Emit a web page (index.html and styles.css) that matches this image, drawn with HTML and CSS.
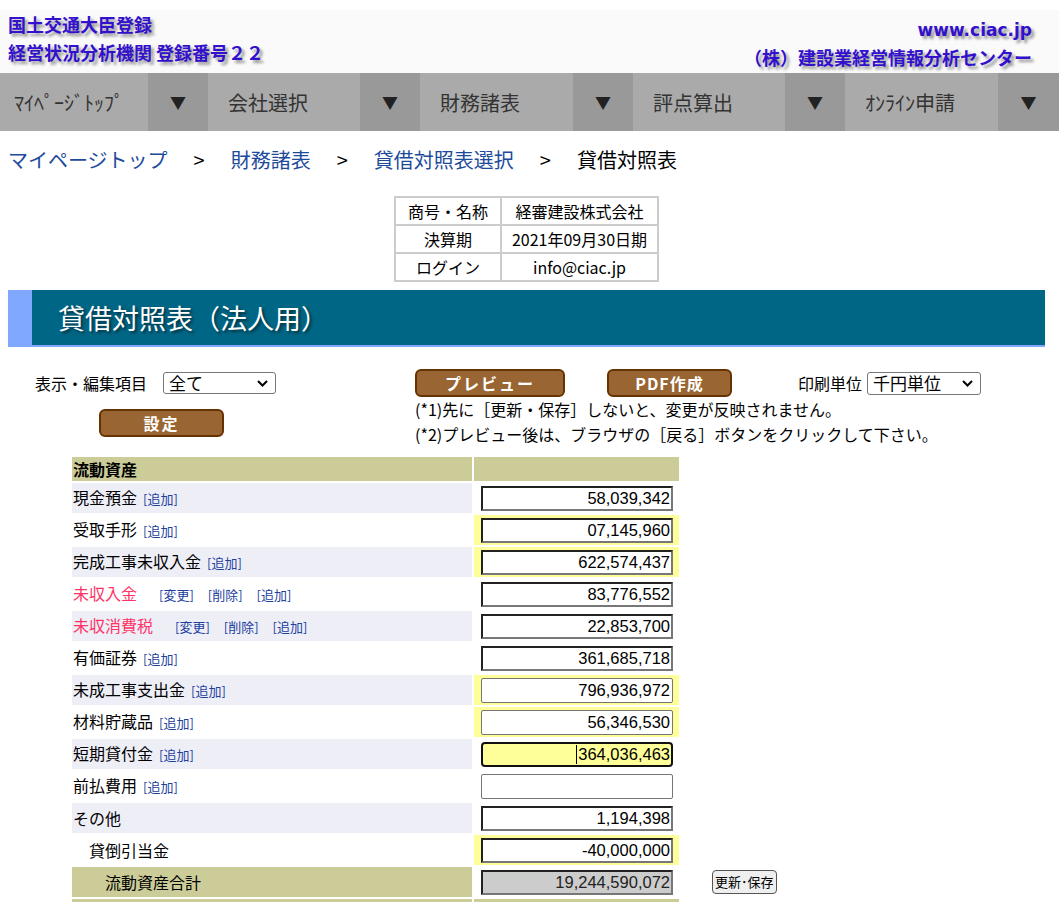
FILE: index.html
```html
<!DOCTYPE html>
<html lang="ja">
<head>
<meta charset="utf-8">
<title>貸借対照表（法人用）</title>
<link rel="stylesheet" href="styles.css">
</head>
<body>
<header class="site-header">
  <div class="brand-left">
    <div>国土交通大臣登録</div>
    <div>経営状況分析機関 登録番号２２</div>
  </div>
  <div class="brand-right">
    <div class="url">www.ciac.jp</div>
    <div>（株）建設業経営情報分析センター</div>
  </div>
</header>

<nav class="main-nav">
  <div class="nav-item first"><span class="nav-label">ﾏｲﾍﾟｰｼﾞﾄｯﾌﾟ</span><span class="nav-arrow">▼</span></div>
  <div class="nav-item"><span class="nav-label">会社選択</span><span class="nav-arrow">▼</span></div>
  <div class="nav-item"><span class="nav-label">財務諸表</span><span class="nav-arrow">▼</span></div>
  <div class="nav-item"><span class="nav-label">評点算出</span><span class="nav-arrow">▼</span></div>
  <div class="nav-item"><span class="nav-label">ｵﾝﾗｲﾝ申請</span><span class="nav-arrow">▼</span></div>
</nav>

<main class="page">
  <div class="breadcrumb">
    <a href="#">マイページトップ</a><span class="sep">&gt;</span><a href="#">財務諸表</a><span class="sep">&gt;</span><a href="#">貸借対照表選択</a><span class="sep">&gt;</span><span class="current">貸借対照表</span>
  </div>

  <table class="info">
    <tr><td class="info-key">商号・名称</td><td class="info-val">経審建設株式会社</td></tr>
    <tr><td class="info-key">決算期</td><td class="info-val">2021年09月30日期</td></tr>
    <tr><td class="info-key">ログイン</td><td class="info-val">info@ciac.jp</td></tr>
  </table>

  <div class="title-bar">
    <span class="title-accent"></span>
    <h1 class="title">貸借対照表（法人用）</h1>
  </div>

  <div class="controls">
    <div class="ctl-left">
      <div class="ctl-row">
        <span class="ctl-label">表示・編集項目</span>
        <span class="sel-wrap sel-view">
          <select class="sel"><option>全て</option></select>
          <svg class="chev" width="11" height="7" viewBox="0 0 11 7"><path d="M1 1 L5.5 5.5 L10 1" fill="none" stroke="#000" stroke-width="2"/></svg>
        </span>
      </div>
      <button class="btn btn-set">設定</button>
    </div>
    <div class="ctl-right">
      <div class="ctl-row">
        <button class="btn btn-preview">プレビュー</button>
        <button class="btn btn-pdf">PDF作成</button>
        <span class="ctl-label print-label">印刷単位</span>
        <span class="sel-wrap sel-unit">
          <select class="sel"><option>千円単位</option></select>
          <svg class="chev" width="11" height="7" viewBox="0 0 11 7"><path d="M1 1 L5.5 5.5 L10 1" fill="none" stroke="#000" stroke-width="2"/></svg>
        </span>
      </div>
      <div class="notes">
        <div>(*1)先に［更新・保存］しないと、変更が反映されません。</div>
        <div>(*2)プレビュー後は、ブラウザの［戻る］ボタンをクリックして下さい。</div>
      </div>
    </div>
  </div>

  <table class="bs">
    <tr class="head"><td class="col-l">流動資産</td><td class="col-r"></td></tr>
    <tr class="alt"><td class="col-l"><span class="name">現金預金</span><a class="act" href="#">[追加]</a></td><td class="col-r"><input class="num" value="58,039,342"></td></tr>
    <tr><td class="col-l"><span class="name">受取手形</span><a class="act" href="#">[追加]</a></td><td class="col-r hl"><input class="num" value="07,145,960"></td></tr>
    <tr class="alt"><td class="col-l"><span class="name">完成工事未収入金</span><a class="act" href="#">[追加]</a></td><td class="col-r hl"><input class="num" value="622,574,437"></td></tr>
    <tr><td class="col-l"><span class="name custom">未収入金</span><a class="act first-act" href="#">[変更]</a><a class="act gap" href="#">[削除]</a><a class="act gap" href="#">[追加]</a></td><td class="col-r"><input class="num" value="83,776,552"></td></tr>
    <tr class="alt"><td class="col-l"><span class="name custom">未収消費税</span><a class="act first-act" href="#">[変更]</a><a class="act gap" href="#">[削除]</a><a class="act gap" href="#">[追加]</a></td><td class="col-r"><input class="num" value="22,853,700"></td></tr>
    <tr><td class="col-l"><span class="name">有価証券</span><a class="act" href="#">[追加]</a></td><td class="col-r"><input class="num" value="361,685,718"></td></tr>
    <tr class="alt"><td class="col-l"><span class="name">未成工事支出金</span><a class="act" href="#">[追加]</a></td><td class="col-r hl"><input class="num plain" value="796,936,972"></td></tr>
    <tr><td class="col-l"><span class="name">材料貯蔵品</span><a class="act" href="#">[追加]</a></td><td class="col-r hl"><input class="num plain" value="56,346,530"></td></tr>
    <tr class="alt"><td class="col-l"><span class="name">短期貸付金</span><a class="act" href="#">[追加]</a></td><td class="col-r"><span class="num active"><span class="caret"></span>364,036,463</span></td></tr>
    <tr><td class="col-l"><span class="name">前払費用</span><a class="act" href="#">[追加]</a></td><td class="col-r"><input class="num plain" value=""></td></tr>
    <tr class="alt"><td class="col-l"><span class="name">その他</span></td><td class="col-r"><input class="num" value="1,194,398"></td></tr>
    <tr><td class="col-l indent1"><span class="name">貸倒引当金</span></td><td class="col-r hl"><input class="num" value="-40,000,000"></td></tr>
    <tr class="total"><td class="col-l indent2"><span class="name">流動資産合計</span></td><td class="col-r"><input class="num sum" value="19,244,590,072" readonly></td><td class="col-x"><button class="save">更新･保存</button></td></tr>
    <tr class="head"><td class="col-l"></td><td class="col-r"></td></tr>
  </table>
</main>
</body>
</html>
```

FILE: styles.css
```css
* {
  box-sizing: border-box;
}

body {
  margin: 0;
  font-family: "Noto Sans CJK JP", "Noto Sans", sans-serif;
  color: #000;
  background: #fff;
}

/* ---------- header ---------- */
.site-header {
  display: flex;
  justify-content: space-between;
  margin-top: 10px;
  height: 63px;
  background: #fafafa;
  padding: 0 27px 0 8px;
  font-weight: bold;
  font-size: 18px;
  color: #3311cc;
  text-shadow: 3px 3px 3px rgba(0, 0, 0, 0.4);
}

.brand-left {
  line-height: 28px;
}

.brand-right {
  text-align: right;
  line-height: 27px;
  padding-top: 7px;
}

.brand-right .url {
  font-family: "DejaVu Sans", Verdana, sans-serif;
  font-size: 17px;
}

/* ---------- nav ---------- */
.main-nav {
  display: grid;
  grid-template-columns: 208px 212px 213px 212px 1fr;
  height: 58px;
  background: #aaaaaa;
}

.nav-item {
  display: flex;
}

.nav-label {
  flex: 1;
  display: flex;
  align-items: center;
  padding-left: 20px;
  font-size: 20px;
  color: #333;
}

.nav-item.first .nav-label {
  padding-left: 14px;
}

.nav-arrow {
  width: 60px;
  display: flex;
  align-items: center;
  justify-content: center;
  background: #999999;
  font-size: 16px;
  color: #222;
}

.nav-item:last-child .nav-arrow {
  width: 61px;
}

/* ---------- page ---------- */
.page {
  padding: 0 14px 0 8px;
}

.breadcrumb {
  padding-top: 15px;
  font-size: 20px;
  line-height: 28px;
  white-space: nowrap;
}

.breadcrumb a {
  color: #1d4b9b;
  text-decoration: none;
}

.breadcrumb .sep {
  margin: 0 26px;
}

.info {
  margin: 22px auto 0;
  border-collapse: collapse;
  table-layout: fixed;
  width: 265px;
}

.info td {
  border: 2px solid #cccccc;
  height: 28px;
  padding: 0;
  text-align: center;
  font-size: 16px;
  line-height: 20px;
}

.info .info-key {
  width: 106px;
}

/* ---------- title ---------- */
.title-bar {
  display: flex;
  margin-top: 8px;
  height: 57px;
  background: #006685;
  border-bottom: 2px solid #80a8ff;
}

.title-accent {
  width: 24px;
  background: #80a8ff;
}

.title {
  margin: 0;
  padding-left: 26px;
  font-size: 27px;
  font-weight: normal;
  line-height: 55px;
  color: #fff;
  text-shadow: 2px 2px 3px rgba(0, 0, 0, 0.55);
}

/* ---------- controls ---------- */
.controls {
  display: flex;
  padding: 22px 0 0 27px;
}

.ctl-left {
  width: 380px;
}

.ctl-row {
  display: flex;
  align-items: center;
  height: 28px;
}

.ctl-label {
  font-size: 16px;
}

.sel-wrap {
  position: relative;
  display: inline-block;
  height: 22px;
}

.sel {
  display: block;
  width: 100%;
  height: 100%;
  appearance: none;
  -webkit-appearance: none;
  font-family: "Noto Sans CJK JP", sans-serif;
  font-size: 17px;
  line-height: 20px;
  padding: 0 0 0 5px;
  border: 1px solid #767676;
  border-radius: 3px;
  background: #fff;
  color: #000;
}

.chev {
  position: absolute;
  right: 8px;
  top: 8px;
  pointer-events: none;
}

.sel-view {
  width: 113px;
  margin-left: 16px;
}

.sel-unit {
  width: 114px;
  height: 23px;
  margin-left: 5px;
}

.btn {
  height: 28px;
  background: #996633;
  color: #fff;
  border: 2px solid #663300;
  border-radius: 6px;
  font-family: "Noto Sans CJK JP", sans-serif;
  font-weight: bold;
  font-size: 16px;
  letter-spacing: 2px;
  padding: 0;
  line-height: 22px;
}

.btn-set {
  display: block;
  width: 125px;
  margin: 12px 0 0 64px;
}

.btn-preview {
  width: 150px;
}

.btn-pdf {
  width: 125px;
  margin-left: 42px;
  letter-spacing: 1px;
}

.print-label {
  margin-left: 66px;
}

.notes {
  font-size: 16px;
  line-height: 25px;
  white-space: nowrap;
}

/* ---------- balance sheet table ---------- */
.bs {
  border-collapse: separate;
  border-spacing: 2px;
  margin: 8px 0 0 62px;
}

.bs td {
  padding: 0;
  height: 30px;
  vertical-align: middle;
  font-size: 16px;
  line-height: 20px;
  white-space: nowrap;
}

.bs .col-l {
  width: 400px;
  padding-left: 1px;
}

.bs .col-r {
  width: 205px;
  padding-left: 7px;
}

.bs tr.head td {
  height: 24px;
  background: #cccc99;
  font-weight: bold;
}

.bs tr.alt .col-l {
  background: #eeeef7;
}

.bs tr.total .col-l {
  background: #cccc99;
}

.bs .col-r.hl {
  background: #ffff99;
}

.bs .indent1 {
  padding-left: 17px;
}

.bs .indent2 {
  padding-left: 33px;
}

.name.custom {
  color: #ff3366;
}

.act {
  margin-left: 6px;
  font-size: 13px;
  color: #1c3fa0;
  text-decoration: none;
}

.act.first-act {
  margin-left: 22px;
}

.act.gap {
  margin-left: 14px;
}

.num {
  display: block;
  width: 192px;
  height: 25px;
  margin: 0;
  padding: 0 1px;
  font-family: "Liberation Sans", Arial, sans-serif;
  font-size: 16.5px;
  line-height: 21px;
  text-align: right;
  color: #000;
  background: #fff;
  border: 2px solid;
  border-color: #222 #777 #777 #222;
  border-radius: 0;
  outline: none;
}

.num.plain {
  border: 1px solid #767676;
  border-radius: 2px;
  padding: 0 2px;
}

.num.active {
  background: #ffff99;
  border: 2px solid #111;
  border-radius: 4px;
}

.caret {
  display: inline-block;
  width: 1px;
  height: 19px;
  margin-right: 1px;
  vertical-align: -4px;
  background: #000;
}

.num.sum {
  background: #cccccc;
  color: #222;
}

.bs .col-x {
  padding-left: 31px;
}

.save {
  height: 24px;
  padding: 0 2px;
  font-family: "Noto Sans CJK JP", sans-serif;
  font-size: 13px;
  line-height: 18px;
  background: #efefef;
  color: #000;
  border: 1px solid #555;
  border-radius: 4px;
}
```
